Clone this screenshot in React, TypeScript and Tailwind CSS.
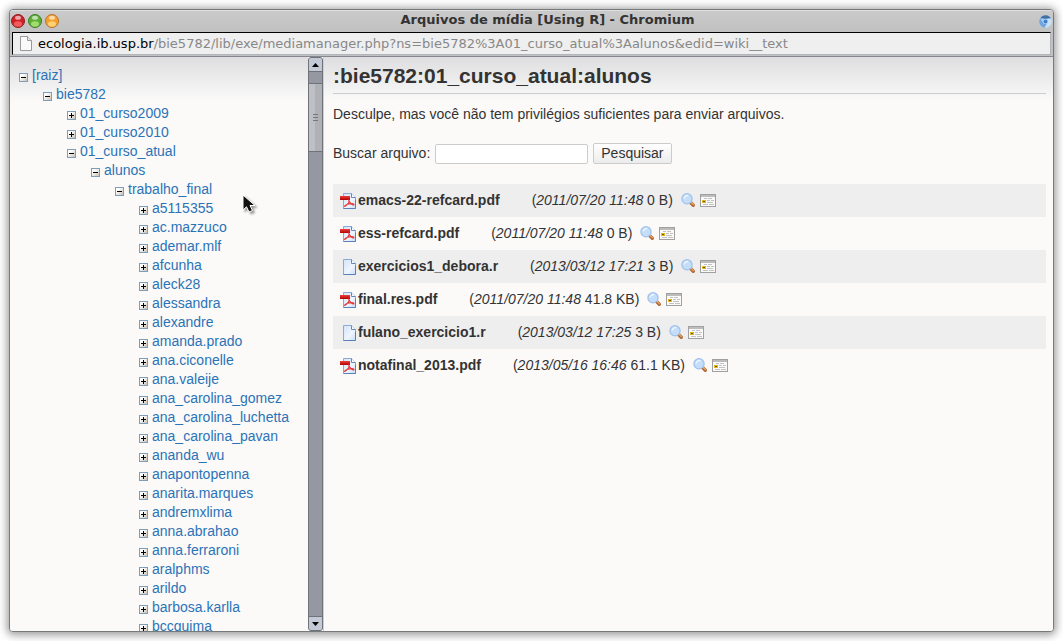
import React from 'react';

type Folder = { name: string; children?: Folder[] };

const students = [
  'a5115355', 'ac.mazzuco', 'ademar.mlf', 'afcunha', 'aleck28', 'alessandra', 'alexandre',
  'amanda.prado', 'ana.ciconelle', 'ana.valeije', 'ana_carolina_gomez', 'ana_carolina_luchetta',
  'ana_carolina_pavan', 'ananda_wu', 'anapontopenna', 'anarita.marques', 'andremxlima',
  'anna.abrahao', 'anna.ferraroni', 'aralphms', 'arildo', 'barbosa.karlla', 'bccguima',
];

const root: Folder = {
  name: '[raiz]',
  children: [
    {
      name: 'bie5782',
      children: [
        { name: '01_curso2009' },
        { name: '01_curso2010' },
        {
          name: '01_curso_atual',
          children: [
            {
              name: 'alunos',
              children: [{ name: 'trabalho_final', children: students.map((name) => ({ name })) }],
            },
          ],
        },
      ],
    },
  ],
};

const files = [
  { name: 'emacs-22-refcard.pdf', date: '2011/07/20 11:48', size: '0 B' },
  { name: 'ess-refcard.pdf', date: '2011/07/20 11:48', size: '0 B' },
  { name: 'exercicios1_debora.r', date: '2013/03/12 17:21', size: '3 B' },
  { name: 'final.res.pdf', date: '2011/07/20 11:48', size: '41.8 KB' },
  { name: 'fulano_exercicio1.r', date: '2013/03/12 17:25', size: '3 B' },
  { name: 'notafinal_2013.pdf', date: '2013/05/16 16:46', size: '61.1 KB' },
];

function Toggle({ open }: { open: boolean }) {
  return (
    <svg width="9" height="9" viewBox="0 0 9 9" shapeRendering="crispEdges" className="block">
      <defs>
        <linearGradient id="toggleFill" x1="0" y1="0" x2="1" y2="1">
          <stop offset="0.3" stopColor="#ffffff" />
          <stop offset="1" stopColor="#c3bbad" />
        </linearGradient>
      </defs>
      <rect x="0.5" y="0.5" width="8" height="8" fill="url(#toggleFill)" stroke="#7d9db8" />
      <path d="M2 4h5v1H2z" fill="#000" />
      {!open && <path d="M4 2h1v5H4z" fill="#000" />}
    </svg>
  );
}

function TreeNode({ node }: { node: Folder }) {
  const open = !!node.children;
  return (
    <li>
      <div className="flex h-[19px] items-center gap-1">
        <button type="button" aria-label={`Alternar ${node.name}`} className="mt-1">
          <Toggle open={open} />
        </button>
        <a href="#" className="whitespace-nowrap text-[#2b73b7]">{node.name}</a>
      </div>
      {node.children && (
        <ul className="pl-6">
          {node.children.map((c) => <TreeNode key={c.name} node={c} />)}
        </ul>
      )}
    </li>
  );
}

function FileIcon({ pdf }: { pdf: boolean }) {
  return (
    <svg width="16" height="16" viewBox="0 0 16 16" className="block shrink-0">
      <defs>
        <linearGradient id="paper" x1="0" y1="0" x2="1" y2="1">
          <stop offset="0" stopColor="#d3e4fa" />
          <stop offset="0.6" stopColor="#eef5fe" />
          <stop offset="1" stopColor="#c8dcf5" />
        </linearGradient>
        <linearGradient id="band" x1="0" y1="0" x2="0" y2="1">
          <stop offset="0" stopColor="#f04040" />
          <stop offset="1" stopColor="#b00000" />
        </linearGradient>
      </defs>
      <path d="M3.500 0.500h8l4 4v11h-12z" fill="url(#paper)" stroke="#8aabd8" />
      <path d="M11.500 0.500v4h4" fill="#fff" stroke="#6688b8" />
      <path d="M3.500 15.500h12v-9" fill="none" stroke="#5a80ba" />
      {pdf && (
        <>
          <path d="M0 3h10v4H0z" fill="url(#band)" />
          <path d="M8.500 6.500c1 1 .3 3.100-1 4.700-1 1.300-2.300 2.300-3 2.200 1-1.500 4.500-3 7.500-2.800 1.500.1 2.500 1 1.800 1.400-1.600.3-4.400-2.200-5.300-5.500" fill="none" stroke="#e33a3a" strokeWidth="1.100" />
        </>
      )}
    </svg>
  );
}

function Magnifier() {
  return (
    <svg width="15" height="15" viewBox="0 0 15 15" className="block">
      <path d="M9.300 9.300l3 3" stroke="#b06a38" strokeWidth="3.400" strokeLinecap="round" />
      <path d="M9.800 9l2.600 2.600" stroke="#e9a765" strokeWidth="1.300" strokeLinecap="round" />
      <circle cx="6" cy="5.800" r="5.100" fill="#c4defa" stroke="#a3c2ec" strokeWidth="1.300" />
      <path d="M3.200 5.500a3 3 0 0 1 4-2.600" fill="none" stroke="#f2f9ff" strokeWidth="1.300" />
    </svg>
  );
}

function Details() {
  return (
    <svg width="16" height="14" viewBox="0 0 16 14" shapeRendering="crispEdges" className="block">
      <rect x="0.5" y="0.5" width="15" height="12" fill="#fafafa" stroke="#a0a0a0" />
      <path d="M1 1h14v2H1z" fill="#bcbcbc" />
      <path d="M2 6h4v3H2z" fill="#e0b820" />
      <path d="M3 7h2v1H3z" fill="#6b5510" />
      <path d="M4 4h3v1H4zM8 4h4v1H8zM7 6h3v1H7zM11 6h3v1h-3zM7 8h6v1H7zM3 10h5v1H3zM9 10h5v1H9z" fill="#c2c2c2" />
    </svg>
  );
}

function ChromiumLogo() {
  return (
    <svg width="13" height="13" viewBox="0 0 14 14" className="block">
      <circle cx="7" cy="7" r="6.800" fill="#a9cdf0" />
      <path d="M1.300 3.400A6.800 6.800 0 0 1 13 3.800L7 4Z" fill="#3f70a6" />
      <path d="M1.300 3.400A6.800 6.800 0 0 0 6 13.700L8 9.500 4 8Z" fill="#6fa5dc" />
      <path d="M13 3.800A6.800 6.800 0 0 1 6 13.700L9.800 8 9 4Z" fill="#c8e1f8" />
      <circle cx="7" cy="7" r="2.800" fill="#b5d5f4" />
      <circle cx="7" cy="7" r="2.100" fill="#3e7fc6" />
    </svg>
  );
}

function Light({ rim, core, glow }: { rim: string; core: string; glow: string }) {
  return (
    <svg width="14" height="14" viewBox="0 0 14 14" className="block">
      <circle cx="7" cy="7" r="6.500" fill={core} stroke={rim} />
      <ellipse cx="7" cy="10" rx="4" ry="2.800" fill={glow} opacity="0.75" />
      <ellipse cx="7" cy="3.800" rx="3" ry="2" fill="#fff" opacity="0.6" />
    </svg>
  );
}

function Scrollbar() {
  return (
    <div className="flex w-[15px] shrink-0 flex-col rounded-[3px] border border-[#70727a] bg-[#9598a1]">
      <button type="button" aria-label="Rolar para cima" className="flex h-[14px] items-center justify-center rounded-t-[2px] border-b border-[#70727a] bg-[#c4c9d6]">
        <svg width="7" height="4" viewBox="0 0 7 4"><path d="M3.500 0L7 4H0z" fill="#000" /></svg>
      </button>
      <div className="flex flex-1 flex-col pt-[11px]">
        <div className="flex h-[69px] flex-col items-center justify-center gap-[2px] border-y border-[#70727a] bg-linear-to-r from-[#bfc0c5] from-50% to-[#b0b1b7] to-50%">
          <span className="h-px w-[5px] bg-[#777]" />
          <span className="h-px w-[5px] bg-[#777]" />
          <span className="h-px w-[5px] bg-[#777]" />
        </div>
      </div>
      <button type="button" aria-label="Rolar para baixo" className="flex h-[14px] items-center justify-center rounded-b-[2px] border-t border-[#70727a] bg-[#c4c9d6]">
        <svg width="7" height="4" viewBox="0 0 7 4"><path d="M0 0h7L3.500 4z" fill="#000" /></svg>
      </button>
    </div>
  );
}

export default function App() {
  return (
    <div className="h-screen overflow-hidden bg-white px-[9px] py-[9px] font-['Liberation_Sans',Arial,sans-serif] text-[14px] leading-[19px] text-[#333]">
      <div className="relative flex h-full flex-col overflow-hidden rounded-[4px] border border-[#777a7a] bg-[#fbfaf9] shadow-[0_1px_8px_2px_rgba(0,0,0,0.4)]">
        <header className="flex h-[21px] shrink-0 items-center border-t border-[#dedede] bg-linear-to-b from-[#cacaca] to-[#c1c1c1] px-px">
          <div className="flex flex-1 gap-[3px] pr-8">
            <Light rim="#8b2020" core="#cf2028" glow="#ff7070" />
            <Light rim="#3f7a2c" core="#5fae35" glow="#b5ec80" />
            <Light rim="#b57333" core="#f5a02c" glow="#ffe08a" />
          </div>
          <h1 className="pb-[3px] font-['DejaVu_Sans',sans-serif] text-[13px] leading-4 font-bold whitespace-nowrap text-[#333]">
            Arquivos de mídia [Using R] - Chromium
          </h1>
          <div className="flex flex-1 justify-end"><ChromiumLogo /></div>
        </header>
        <div className="shrink-0 border-b border-[#85878f] bg-[#c1c1c1] px-[2px] pt-px pb-px">
          <div className="flex h-[23px] items-center gap-[6px] border border-t-black border-r-[#b0b4bd] border-b-[#b0b4bd] border-l-black bg-[#efefef] pl-[7px]">
            <svg width="12" height="15" viewBox="0 0 12 15" className="block">
              <path d="M0.500 0.500h7l4 4v10h-11z" fill="#fafafa" stroke="#999" />
              <path d="M7.500 0.500v4h4" fill="#e8e8e8" stroke="#999" />
            </svg>
            <span className="font-['DejaVu_Sans',sans-serif] text-[13px] leading-4 whitespace-nowrap text-[#888]">
              <span className="text-black">ecologia.ib.usp.br</span>/bie5782/lib/exe/mediamanager.php?ns=bie5782%3A01_curso_atual%3Aalunos&amp;edid=wiki__text
            </span>
          </div>
        </div>
        <div className="flex min-h-0 flex-1">
          <nav aria-label="Pastas" className="flex w-[314px] shrink-0 border-r border-[#d0d0d0]">
            <ul className="min-w-0 flex-1 overflow-hidden bg-linear-to-b from-[#dedee0] to-[#fbfaf9] to-[44px] pt-[9px] pl-[9px]">
              <TreeNode node={root} />
            </ul>
            <Scrollbar />
          </nav>
          <main className="min-w-0 flex-1 overflow-hidden bg-linear-to-b from-[#dedee0] to-[#fbfaf9] to-[44px] pr-[7px] pl-[9px]">
            <h2 className="border-b border-[#ccc] pt-[7px] pb-[5px] text-[21px] leading-6 font-bold">
              :bie5782:01_curso_atual:alunos
            </h2>
            <p className="mt-[11px]">Desculpe, mas você não tem privilégios suficientes para enviar arquivos.</p>
            <form className="mt-[19px] flex items-center gap-[5px]" onSubmit={(e) => e.preventDefault()}>
              <label htmlFor="q">Buscar arquivo:</label>
              <input id="q" type="text" className="h-5 w-[153px] rounded-[2px] border border-[#ccc] bg-white px-1 outline-none" />
              <button type="submit" className="h-[21px] rounded-[2px] border border-[#ccc] bg-linear-to-b from-white to-[#ececec] px-[7px] leading-[19px]">
                Pesquisar
              </button>
            </form>
            <ul className="mt-5">
              {files.map((f) => (
                <li key={f.name} className="flex h-[33px] items-center pl-[7px] whitespace-nowrap odd:bg-[#eee]">
                  <FileIcon pdf={f.name.endsWith('.pdf')} />
                  <a href="#" className="ml-[2px] font-bold text-[#333]">{f.name}</a>
                  <span className="ml-8">(<i>{f.date}</i> {f.size})</span>
                  <a href="#" aria-label={`Ver ${f.name}`} className="ml-2"><Magnifier /></a>
                  <a href="#" aria-label={`Detalhes de ${f.name}`} className="ml-1"><Details /></a>
                </li>
              ))}
            </ul>
          </main>
        </div>
        <svg width="16" height="22" viewBox="0 0 16 22" className="absolute top-[184px] left-[232px] drop-shadow-[2px_2px_1px_rgba(0,0,0,0.4)]">
          <path d="M1 1v15l3.500-3.200L7 18l3.500-1.500L8 11.500h5z" fill="#111" stroke="#fff" />
        </svg>
      </div>
    </div>
  );
}
